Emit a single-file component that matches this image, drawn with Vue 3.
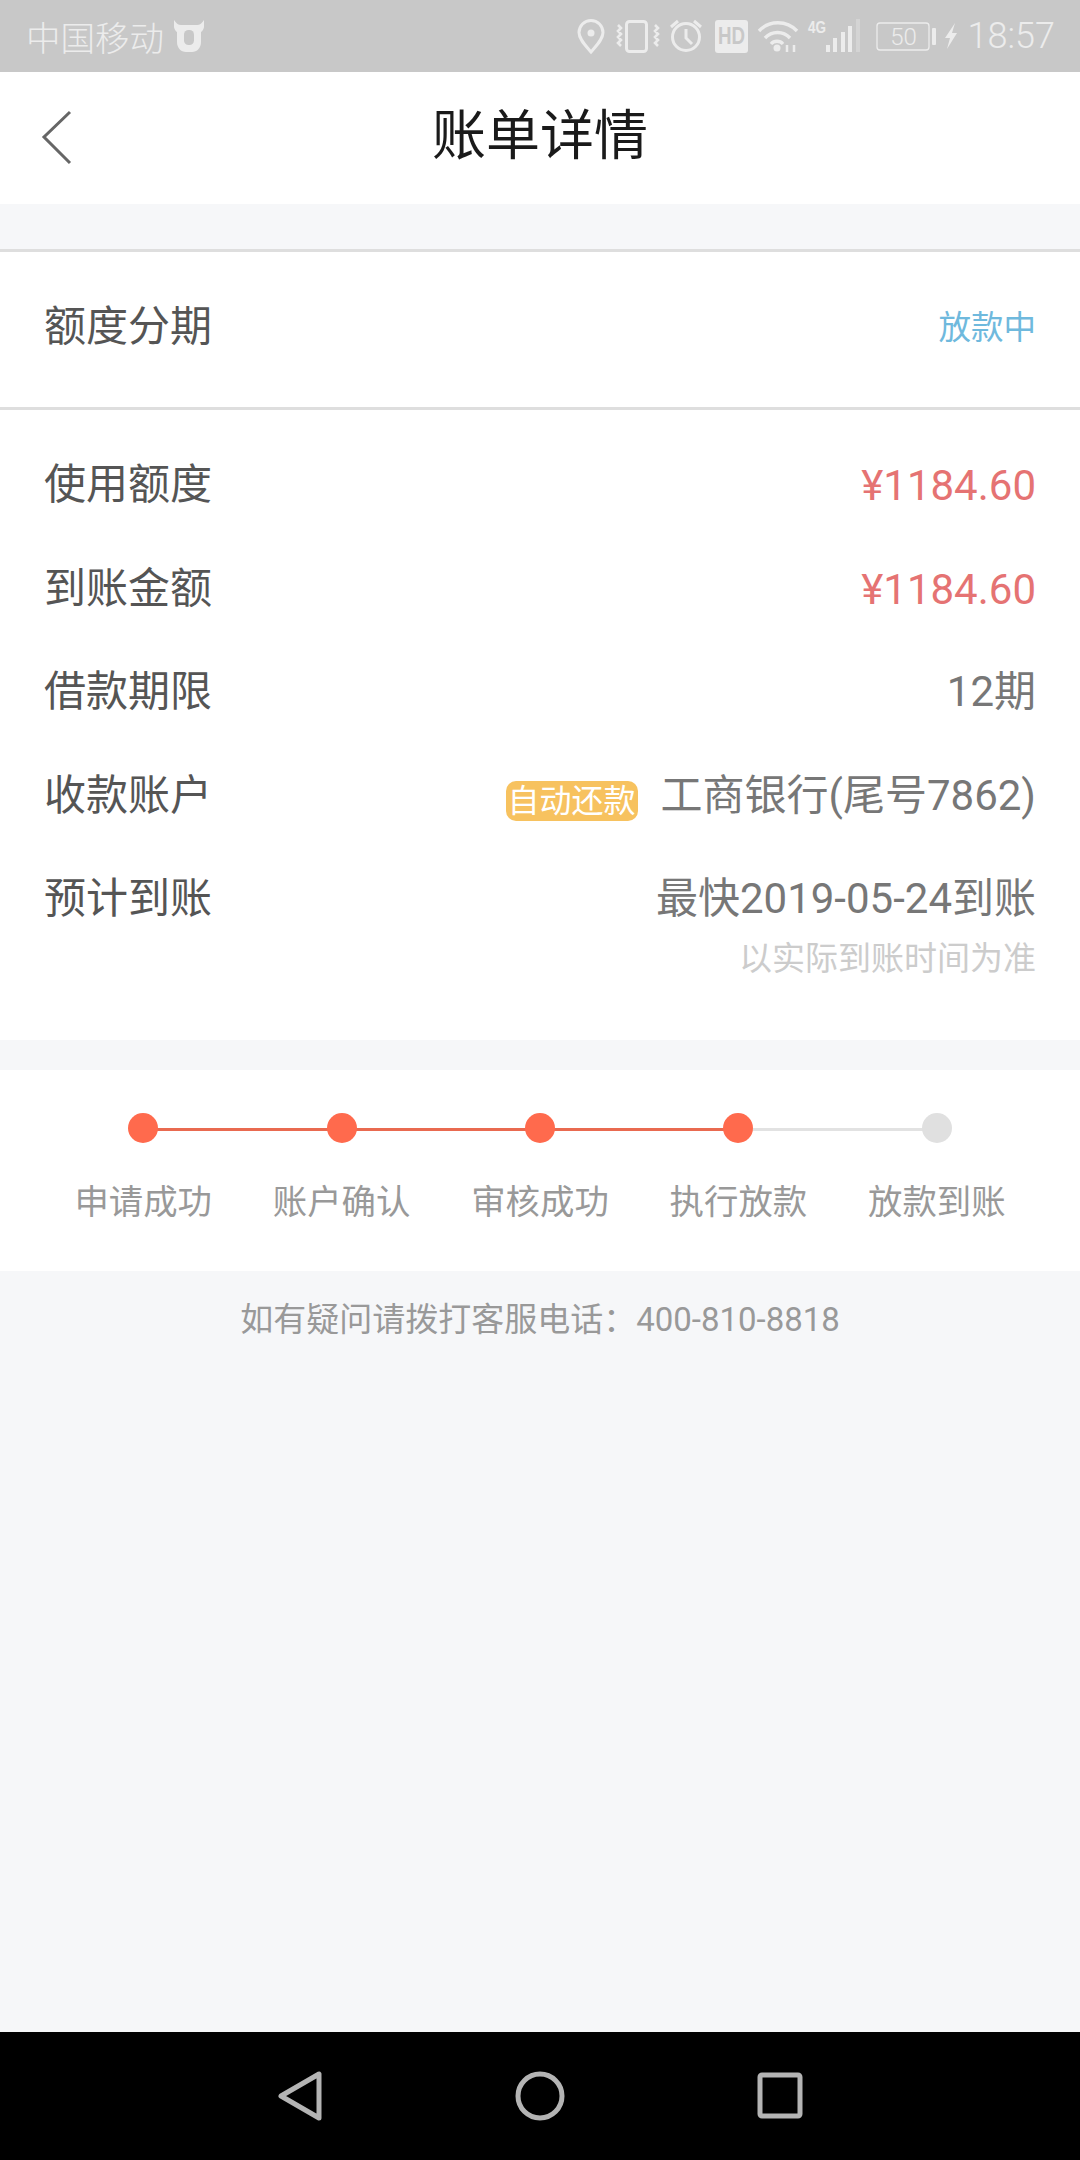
<template>
  <div class="page">
    <div class="status-bar">
      <div class="carrier">
        <span>中国移动</span>
        <svg class="cow" width="30" height="32" viewBox="0 0 30 32">
          <path d="M0 0c2 3 4 5 7 5h16c3 0 5-2 7-5 1 5 0 10-3 12v10c0 6-4 10-9 10h-6c-5 0-9-4-9-10V12C0 10-1 5 0 0z" fill="#ececec" />
          <rect x="10" y="10" width="10" height="15" rx="4.500" fill="#c8c8c8" />
        </svg>
      </div>
      <div class="status-right">
        <svg class="sys-icons" width="400" height="72" viewBox="0 0 400 72">
          <g fill="none" stroke="#ececec" stroke-width="3">
            <!-- pin -->
            <path d="M32 52C26 45 20 39 20 32.500A12 12 0 0 1 44 32.500C44 39 38 45 32 52z" />
            <!-- vibrate -->
            <rect x="67.500" y="21.500" width="20" height="30" rx="3" />
            <path d="M59 25l3 3-3 3 3 3-3 3 3 3-3 3 3 3M96 25l3 3-3 3 3 3-3 3 3 3-3 3 3 3" stroke-width="2.600" />
            <!-- alarm -->
            <circle cx="127" cy="37" r="13.500" />
            <path d="M127 29v9l6 6M112 27l7-6M142 27l-7-6" />
            <!-- wifi -->
            <path d="M200 31a26 26 0 0 1 38 0M206 38a17 17 0 0 1 25 0M212 44a8 8 0 0 1 12 0" stroke-width="3.400" />
          </g>
          <circle cx="32" cy="33" r="3.500" fill="#ececec" />
          <circle cx="218" cy="48" r="3.500" fill="#ececec" />
          <path d="M228 52v-7M235 52v-7" stroke="#ececec" stroke-width="2.500" />
          <rect x="156" y="20" width="33" height="33" rx="3" fill="#ececec" />
          <text x="172.500" y="44" class="hd" textLength="27" lengthAdjust="spacingAndGlyphs">HD</text>
          <text x="258" y="33" class="four-g" textLength="18" lengthAdjust="spacingAndGlyphs">4G</text>
          <g fill="#ececec">
            <rect x="267" y="45" width="4" height="7" />
            <rect x="274" y="38" width="4" height="14" />
            <rect x="282" y="32" width="4" height="20" />
            <rect x="289" y="26" width="4" height="26" />
            <rect x="297" y="19" width="4" height="33" opacity="0.35" />
            <rect x="373" y="28" width="4" height="17" rx="1" />
            <path d="M396 23l-10 15h5l-3 11 10-16h-5z" />
          </g>
          <rect x="318" y="23" width="52" height="27" rx="3" fill="none" stroke="#ececec" stroke-width="1.300" />
          <text x="344.500" y="45" class="batt">50</text>
        </svg>
        <span class="time">18:57</span>
      </div>
    </div>

    <div class="nav-bar">
      <svg class="back" width="32" height="58" viewBox="0 0 32 58">
        <path d="M29 3L3 28l26 26" fill="none" stroke="#666" stroke-width="3" />
      </svg>
      <h1>账单详情</h1>
    </div>

    <div class="type-row">
      <span class="label">额度分期</span>
      <span class="state">放款中</span>
    </div>

    <div class="detail">
      <div v-for="row in rows" :key="row.label" class="row">
        <span class="label">{{ row.label }}</span>
        <span class="value" :class="{ money: row.money }">
          <i v-if="row.tag" class="tag">{{ row.tag }}</i>
          {{ row.value }}
        </span>
      </div>
      <p class="note">以实际到账时间为准</p>
    </div>

    <div class="steps">
      <div v-for="(s, i) in steps" :key="s" class="step" :class="{ done: i < 4, linked: i < 3 }">
        <span class="dot"></span>
        <span class="step-name">{{ s }}</span>
      </div>
    </div>

    <p class="hotline">如有疑问请拨打客服电话：400-810-8818</p>

    <div class="sys-nav">
      <svg width="50" height="56" viewBox="0 0 50 56">
        <path d="M44 6v44L6 28z" fill="none" stroke="#b4b4b4" stroke-width="5" stroke-linejoin="round" />
      </svg>
      <svg width="50" height="56" viewBox="0 0 50 56">
        <circle cx="25" cy="28" r="22" fill="none" stroke="#b4b4b4" stroke-width="5" />
      </svg>
      <svg width="50" height="56" viewBox="0 0 50 56">
        <rect x="5" y="7" width="40" height="41" rx="2" fill="none" stroke="#b4b4b4" stroke-width="5" />
      </svg>
    </div>
  </div>
</template>

<script setup>
const rows = [
  { label: '使用额度', value: '¥1184.60', money: true },
  { label: '到账金额', value: '¥1184.60', money: true },
  { label: '借款期限', value: '12期' },
  { label: '收款账户', value: '工商银行(尾号7862)', tag: '自动还款' },
  { label: '预计到账', value: '最快2019-05-24到账' }
]

const steps = ['申请成功', '账户确认', '审核成功', '执行放款', '放款到账']
</script>

<style>
html,
body {
  margin: 0;
  background: #f6f7f9;
}
</style>

<style scoped>
.page {
  display: flex;
  flex-direction: column;
  width: 1080px;
  height: 2160px;
  background: #f6f7f9;
  font-family: Roboto, "Noto Sans CJK SC", sans-serif;
  overflow: hidden;
}

.status-bar {
  display: flex;
  justify-content: space-between;
  align-items: center;
  flex: none;
  height: 72px;
  padding: 0 25px 0 26px;
  background: #c8c8c8;
  color: #ececec;
}

.carrier {
  display: flex;
  align-items: center;
  gap: 10px;
  font-size: 34.500px;
  font-weight: 300;
}

.status-right {
  display: flex;
  align-items: center;
}

.sys-icons {
  display: block;
}

.hd {
  font: 700 23px "Liberation Sans", sans-serif;
  fill: #c8c8c8;
  text-anchor: middle;
}

.four-g {
  font: 700 17px "Liberation Sans", sans-serif;
  fill: #ececec;
  text-anchor: middle;
}

.batt {
  font: 300 24px Roboto, sans-serif;
  fill: #ececec;
  text-anchor: middle;
}

.time {
  font-size: 36px;
  font-weight: 300;
  margin-left: 9px;
}

.nav-bar {
  position: relative;
  display: flex;
  justify-content: center;
  align-items: center;
  flex: none;
  height: 132px;
  padding-bottom: 14px;
  box-sizing: border-box;
  background: #fff;
}

.nav-bar h1 {
  margin: 0;
  font-size: 54px;
  font-weight: 400;
  color: #1a1a1a;
}

.back {
  position: absolute;
  left: 41px;
  top: 37px;
}

.type-row {
  display: flex;
  justify-content: space-between;
  align-items: center;
  flex: none;
  height: 161px;
  margin-top: 45px;
  padding: 0 44px 15px;
  background: #fff;
  border-top: 3px solid #dedede;
  border-bottom: 3px solid #dedede;
  box-sizing: border-box;
}

.type-row .state {
  padding-top: 4px;
}

.label {
  font-size: 42px;
  color: #555;
}

.state {
  font-size: 32.500px;
  color: #6fb9dd;
}

.detail {
  flex: none;
  height: 630px;
  box-sizing: border-box;
  padding: 22px 44px 0;
  background: #fff;
}

.row {
  display: flex;
  justify-content: space-between;
  align-items: flex-start;
  height: 103.500px;
  padding-top: 18px;
  box-sizing: border-box;
}

.value {
  display: flex;
  align-items: center;
  font-size: 42px;
  color: #777;
}

.value.money {
  padding-top: 11px;
  color: #e57373;
}

.tag {
  display: inline-block;
  height: 40px;
  margin: 20px 23px 0 0;
  padding: 0 2px;
  border-radius: 10px;
  background: #f7c25f;
  color: #fff;
  font-size: 32px;
  font-style: normal;
  line-height: 40px;
}

.note {
  margin: -18px 0 0;
  font-size: 33px;
  color: #ccc;
  text-align: right;
}

.steps {
  display: grid;
  grid-template-columns: repeat(5, 1fr);
  flex: none;
  height: 201px;
  margin-top: 30px;
  padding: 43px 44px 0;
  background: #fff;
  box-sizing: border-box;
}

.step {
  position: relative;
  display: flex;
  flex-direction: column;
  align-items: center;
  gap: 31px;
}

.step:not(:last-child)::after {
  content: "";
  position: absolute;
  left: 50%;
  top: 15px;
  width: 100%;
  height: 3px;
  background: #e2e2e2;
}

.step.linked::after {
  background: #e96a50;
}

.dot {
  position: relative;
  z-index: 1;
  width: 30px;
  height: 30px;
  border-radius: 50%;
  background: #e0e0e0;
}

.step.done .dot {
  background: #ff6a4d;
}

.step-name {
  font-size: 34.400px;
  color: #999;
  white-space: nowrap;
}

.hotline {
  flex: 1;
  margin: 22px 0 0;
  font-size: 33px;
  color: #999;
  text-align: center;
}

.sys-nav {
  display: flex;
  justify-content: center;
  align-items: center;
  gap: 190px;
  flex: none;
  height: 128px;
  background: #000;
}
</style>
